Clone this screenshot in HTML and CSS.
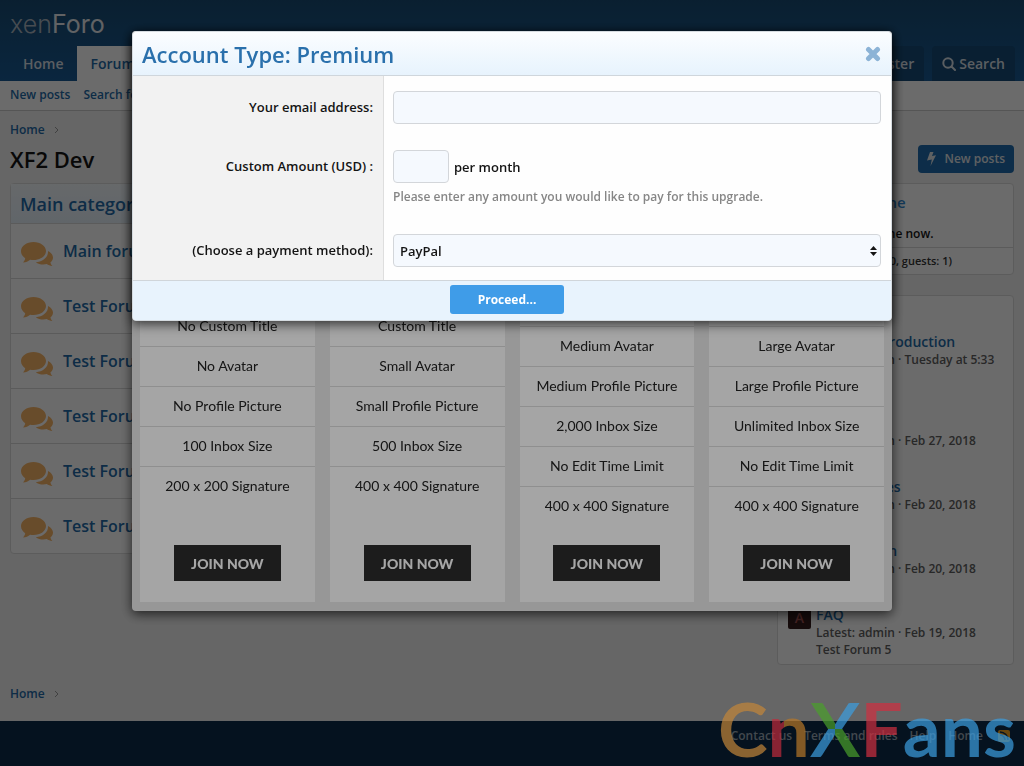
FILE: index.html
```html
<!DOCTYPE html>
<html lang="en">
<head>
<meta charset="UTF-8">
<meta name="viewport" content="width=device-width, initial-scale=1">
<title>XF2 Dev</title>
<link rel="stylesheet" href="styles.css">
</head>
<body>
<svg width="0" height="0" class="defs">
  <symbol id="comments" viewBox="0 0 32 26">
    <path d="M27 9c3 1.500 5 4 5 6.500 0 2-1 3.700-2.600 5 .3 1.400 1 2.500 2 3.500-2.400 0-4.200-.8-5.600-1.900-4 .9-8.300.2-11-1.900C21.500 19.700 27.500 15.500 27 9z"/>
    <path d="M12.500 0C19.400 0 25 4 25 9s-5.600 9-12.500 9c-1.200 0-2.300-.1-3.400-.3C7.300 19.200 5 20.300 2 20.500c1.200-1.200 2-2.600 2.200-4.300C1.600 14.500 0 12 0 9c0-5 5.600-9 12.500-9z"/>
  </symbol>
</svg>

<header class="header">
  <a href="#" class="logo"><span>xen</span>Foro</a>
  <nav class="nav">
    <a href="#" class="tab">Home</a>
    <a href="#" class="tab active">Forums</a>
    <a href="#" class="tab visitor first">Register</a>
    <a href="#" class="tab visitor">
      <svg width="14" height="14" viewBox="0 0 14 14" fill="none" stroke="currentColor" stroke-width="2"><circle cx="6" cy="6" r="4.700"/><path d="M9.500 9.500L13 13" stroke-linecap="round"/></svg>
      Search
    </a>
  </nav>
</header>
<nav class="subnav">
  <a href="#">New posts</a>
  <a href="#">Search forums</a>
</nav>

<main class="main">
  <div class="crumbs"><a href="#">Home</a><svg width="5" height="8" viewBox="0 0 5 8"><path d="M1 1l3 3-3 3" fill="none" stroke="#999"/></svg></div>
  <div class="titlebar">
    <h1>XF2 Dev</h1>
    <a href="#" class="newposts">
      <svg width="9" height="14" viewBox="0 0 9 14"><path d="M3 0h3.500L5 4l4-.8L3.500 14l1.300-6.500L0 8.600z" fill="currentColor"/></svg>
      New posts
    </a>
  </div>

  <div class="columns">
    <section class="block forums">
      <h2>Main category</h2>
      <div class="forum"><svg><use href="#comments"/></svg><a href="#">Main forum</a></div>
      <div class="forum"><svg><use href="#comments"/></svg><a href="#">Test Forum 1</a></div>
      <div class="forum"><svg><use href="#comments"/></svg><a href="#">Test Forum 2</a></div>
      <div class="forum"><svg><use href="#comments"/></svg><a href="#">Test Forum 3</a></div>
      <div class="forum"><svg><use href="#comments"/></svg><a href="#">Test Forum 4</a></div>
      <div class="forum"><svg><use href="#comments"/></svg><a href="#">Test Forum 5</a></div>
    </section>

    <aside class="sidebar">
      <section class="block online">
        <h3>Members online</h3>
        <p>No members online now.</p>
        <footer>Total: 1 (members: 0, guests: 1)</footer>
      </section>
      <section class="block latest">
        <h3>Latest posts</h3>
        <div class="post"><span class="avatar">A</span><div><a href="#">Forums introduction</a><p>Latest: admin · Tuesday at 5:33 PM</p><p>Main forum</p></div></div>
        <div class="post"><span class="avatar">A</span><div><a href="#">Welcome</a><p>Latest: admin · Feb 27, 2018</p><p>Test Forum 1</p></div></div>
        <div class="post"><span class="avatar">A</span><div><a href="#">Forum Rules</a><p>Latest: admin · Feb 20, 2018</p><p>Test Forum 2</p></div></div>
        <div class="post"><span class="avatar">A</span><div><a href="#">Information</a><p>Latest: admin · Feb 20, 2018</p><p>Test Forum 3</p></div></div>
        <div class="post"><span class="avatar">A</span><div><a href="#">FAQ</a><p>Latest: admin · Feb 19, 2018</p><p>Test Forum 5</p></div></div>
      </section>
    </aside>
  </div>

  <div class="crumbs bottom"><a href="#">Home</a><svg width="5" height="8" viewBox="0 0 5 8"><path d="M1 1l3 3-3 3" fill="none" stroke="#999"/></svg></div>
</main>

<footer class="footer">
  <a href="#">Contact us</a>
  <a href="#">Terms and rules</a>
  <a href="#">Help</a>
  <a href="#">Home</a>
  <a href="#" class="rss" aria-label="RSS"><svg width="12" height="12" viewBox="0 0 12 12" fill="none" stroke="#0e2b4a" stroke-width="1.500"><path d="M2 5a5 5 0 0 1 5 5M2 2a8 8 0 0 1 8 8"/></svg></a>
</footer>

<div class="overlay">
  <div class="dialog plans-dialog">
    <div class="dialog-title">Account Upgrades</div>
    <div class="plans">
      <div class="plan">
        <h4>Free</h4><div class="price">$0</div>
        <ul><li>Forum Access</li><li>Ads Displayed</li><li>No Custom Title</li><li>No Avatar</li><li>No Profile Picture</li><li>100 Inbox Size</li><li>200 x 200 Signature</li></ul>
        <button type="button">JOIN NOW</button>
      </div>
      <div class="plan">
        <h4>Basic</h4><div class="price">$5</div>
        <ul><li>Forum Access</li><li>No Ads</li><li>Custom Title</li><li>Small Avatar</li><li>Small Profile Picture</li><li>500 Inbox Size</li><li>400 x 400 Signature</li></ul>
        <button type="button">JOIN NOW</button>
      </div>
      <div class="plan">
        <h4>Plus</h4><div class="price">$10</div>
        <ul><li>No Ads</li><li>Custom Title<br>and Banner</li><li>Medium Avatar</li><li>Medium Profile Picture</li><li>2,000 Inbox Size</li><li>No Edit Time Limit</li><li>400 x 400 Signature</li></ul>
        <button type="button">JOIN NOW</button>
      </div>
      <div class="plan">
        <h4>Premium</h4><div class="price">Custom</div>
        <ul><li>No Ads</li><li>Custom Title<br>and Banner</li><li>Large Avatar</li><li>Large Profile Picture</li><li>Unlimited Inbox Size</li><li>No Edit Time Limit</li><li>400 x 400 Signature</li></ul>
        <button type="button">JOIN NOW</button>
      </div>
    </div>
  </div>
</div>

<div class="overlay">
  <form class="dialog pay-dialog">
    <div class="dialog-title">
      <h2>Account Type: Premium</h2>
      <button type="button" class="close" aria-label="Close"><svg width="16" height="16" viewBox="0 0 16 16"><path d="M3.500 3.500l9 9M12.500 3.500l-9 9" stroke="#8cb3d6" stroke-width="5" stroke-linecap="round"/></svg></button>
    </div>
    <div class="row">
      <label for="email">Your email address:</label>
      <div class="field"><input type="email" id="email"></div>
    </div>
    <div class="row tall">
      <label for="amount">Custom Amount (USD) :</label>
      <div class="field">
        <div class="amount"><input type="text" id="amount"><span>per month</span></div>
        <p class="hint">Please enter any amount you would like to pay for this upgrade.</p>
      </div>
    </div>
    <div class="row">
      <label for="method">(Choose a payment method):</label>
      <div class="field select">
        <select id="method"><option>PayPal</option></select>
        <svg width="7" height="10" viewBox="0 0 7 10"><path d="M3.500 0L7 4H0zM0 6h7l-3.500 4z" fill="#141414"/></svg>
      </div>
    </div>
    <div class="submit"><button type="submit">Proceed...</button></div>
  </form>
</div>

<div class="watermark"><span class="orange">C</span><span class="two-n">n</span><span class="two-x">X</span><span class="red">F</span><span class="blue">ans</span></div>
</body>
</html>
```
FILE: styles.css
```css
* {
  box-sizing: border-box;
}
body {
  margin: 0;
  min-height: 100vh;
  display: flex;
  flex-direction: column;
  background: #f0f0f0;
  color: #141414;
  font-family: "Open Sans", sans-serif;
  font-size: 13px;
  font-weight: 600;
}
a {
  color: #2269a6;
  text-decoration: none;
}
h1, h2, h3, h4, p, ul {
  margin: 0;
  padding: 0;
}
.defs {
  position: absolute;
}

/* header */
.header {
  height: 81px;
  display: flex;
  flex-direction: column;
  justify-content: space-between;
  background: linear-gradient(#184b73, #185a94);
}
.logo {
  padding: 9px 10px 0;
  font-family: Inter, sans-serif;
  font-size: 25px;
  font-weight: 400;
  line-height: 30px;
  color: #e4e8ec;
}
.logo span {
  font-weight: 300;
  color: #a8b4c0;
}
.nav {
  display: flex;
  gap: 8px;
  padding: 0 9px 0 10px;
}
.tab {
  height: 35px;
  padding: 0 13px;
  font-size: 14px;
  line-height: 35px;
  color: #d5dde4;
}
.tab.active {
  margin-left: -8px;
  padding-left: 14px;
  background: #fdfdfd;
  color: #2269a6;
}
.tab.visitor {
  display: flex;
  align-items: center;
  gap: 3px;
  padding: 0 10px;
  border-radius: 4px 4px 0 0;
  background: #164a76;
}
.tab.first {
  margin-left: auto;
}
.subnav {
  display: flex;
  gap: 13px;
  height: 30px;
  padding: 0 10px;
  border-bottom: 1px solid #c8c8c8;
  background: #fdfdfd;
  font-size: 12px;
  line-height: 28px;
}

/* content */
.main {
  flex: 1;
  padding: 10px 10px 0 10px;
}
.crumbs {
  display: flex;
  align-items: center;
  gap: 9px;
  font-size: 12px;
  line-height: 18px;
}
.crumbs.bottom {
  margin-top: 20px;
}
.titlebar {
  display: flex;
  justify-content: space-between;
  align-items: center;
  height: 39px;
  margin-bottom: 5px;
}
h1 {
  font-size: 22px;
  font-weight: 600;
  line-height: 28px;
}
.newposts {
  display: flex;
  align-items: center;
  gap: 9px;
  height: 28px;
  padding: 0 9px;
  border-radius: 4px;
  background: #1f6bac;
  color: #e0e4e8;
  font-size: 12px;
}
.columns {
  display: flex;
  align-items: flex-start;
  gap: 20px;
}
.block {
  border: 1px solid #dadada;
  border-radius: 4px;
  background: #fdfdfd;
}
.forums {
  flex: 1;
}
.forums h2 {
  height: 39px;
  padding-left: 9px;
  background: linear-gradient(#f2f7fb, #e4eff8);
  color: #2269a6;
  font-size: 18px;
  font-weight: 600;
  line-height: 40px;
}
.forum {
  display: flex;
  gap: 10px;
  height: 55px;
  padding: 14px 10px;
  border-top: 1px solid #d6d6d6;
  font-size: 16px;
  line-height: 26px;
}
.forum svg {
  width: 32px;
  height: 26px;
  margin-top: 4px;
  fill: #f5b366;
}
.sidebar {
  width: 237px;
  display: flex;
  flex-direction: column;
  gap: 20px;
}
.block h3 {
  padding: 0 10px;
  color: #2e86cf;
  font-size: 15px;
  font-weight: 600;
  line-height: 37px;
}
.online p {
  padding: 0 10px;
  font-size: 12px;
  line-height: 26px;
}
.online footer {
  border-top: 1px solid #d6d6d6;
  padding: 0 10px;
  color: #333;
  font-size: 11px;
  line-height: 26px;
}
.latest {
  padding-bottom: 6px;
}
.post {
  display: flex;
  gap: 5px;
  padding: 0 10px 12px;
}
.post:last-child {
  padding-bottom: 0;
}
.post > div {
  width: 180px;
}
.post a {
  display: block;
  font-size: 14px;
  line-height: 18px;
}
.post p {
  color: #606060;
  font-size: 12px;
  line-height: 17px;
}
.avatar {
  width: 23px;
  height: 23px;
  border-radius: 2px;
  background: #331a1a;
  color: #a05050;
  font-size: 14px;
  line-height: 23px;
  text-align: center;
}
.footer {
  display: flex;
  justify-content: flex-end;
  gap: 12px;
  height: 45px;
  padding: 6px 14px 0 10px;
  background: #0e2b4a;
  font-size: 12px;
  line-height: 18px;
}
.footer a {
  color: #9dabb8;
}
.footer .rss {
  width: 12px;
  height: 12px;
  margin: 3px 0 0 3px;
  border-radius: 2px;
  background: #f5a623;
  line-height: 0;
}

/* dialogs */
.overlay {
  position: fixed;
  inset: 0;
  padding-top: 31px;
  background: rgba(0, 0, 0, .35);
}
.dialog {
  max-width: 760px;
  margin: 0 auto;
  border-radius: 4px;
  box-shadow: 0 3px 12px rgba(0, 0, 0, .7);
}
.dialog-title {
  display: flex;
  justify-content: space-between;
  align-items: center;
  height: 44px;
  padding: 0 10px 0 9px;
  border-bottom: 1px solid #cfd6dc;
  border-radius: 4px 4px 0 0;
  background: linear-gradient(#fbfdff, #e7f3fd);
}
.dialog-title h2 {
  color: #2a70ac;
  font-size: 22px;
  font-weight: 600;
}
.plans-dialog {
  background: #e8e8e8;
}
.plans {
  display: flex;
  gap: 15px;
  padding: 9px 8px;
  font-family: Lato, sans-serif;
  font-weight: 400;
}
.plan {
  flex: 1;
  display: flex;
  flex-direction: column;
  padding-bottom: 21px;
  background: #fdfdfd;
  text-align: center;
}
.plan h4 {
  font-size: 20px;
  line-height: 50px;
}
.price {
  font-size: 36px;
  line-height: 92px;
}
.plan ul {
  margin-bottom: 19px;
  list-style: none;
}
.plan li {
  padding: 9px 4px 10px;
  border-top: 1px solid #dcdcdc;
  font-size: 14px;
  line-height: 20px;
  color: #222;
}
.plan button {
  flex-shrink: 0;
  width: 107px;
  height: 36px;
  margin: auto auto 0;
  border: 0;
  background: #2c2c2c;
  color: #fff;
  font: 900 14px Lato, sans-serif;
}
.pay-dialog {
  position: relative;
  overflow: hidden;
  border: 1px solid #d5dbe0;
  background: #fefefe;
}
.close {
  padding: 0;
  border: 0;
  background: none;
  line-height: 0;
}
.row {
  display: flex;
}
.row label {
  width: 251px;
  padding: 15px 10px 13px 0;
  border-right: 1px solid #dedede;
  background: #f2f2f2;
  line-height: 33px;
  text-align: right;
}
.field {
  flex: 1;
  padding: 15px 10px 13px 9px;
}
.tall .field {
  padding: 13px 10px 12px 9px;
}
.tall label {
  padding-top: 13px;
}
.row input,
.row select {
  display: block;
  width: 100%;
  height: 33px;
  padding: 0 6px;
  border: 1px solid #d3d6da;
  border-radius: 4px;
  background: #f5f9fe;
  color: #141414;
  font: 600 13px "Open Sans", sans-serif;
}
.row select {
  appearance: none;
}
.select {
  position: relative;
}
.select svg {
  position: absolute;
  right: 14px;
  top: 27px;
}
.amount {
  display: flex;
  align-items: center;
  gap: 5px;
}
.row .amount input {
  width: 56px;
}
.hint {
  margin-top: 4px;
  color: #868686;
  font-size: 12px;
  line-height: 20px;
}
.submit {
  display: flex;
  justify-content: center;
  padding: 4px 10px 6px 0;
  border-top: 1px solid #d0d5da;
  background: #e8f3fd;
}
.submit button {
  width: 114px;
  height: 29px;
  border: 0;
  border-radius: 3px;
  background: #3f9ce8;
  color: #fff;
  font: bold 12px "Open Sans", sans-serif;
}

/* site mark over the page corner */
.watermark {
  position: fixed;
  right: 8px;
  bottom: 0;
  display: flex;
  font-family: Lato, sans-serif;
  font-size: 75px;
  font-weight: 700;
  line-height: 75px;
  opacity: .7;
}
.orange {
  color: #c4873a;
}
.red {
  color: #d03040;
}
.blue {
  color: #3c9ee0;
}
.two-n,
.two-x {
  background: linear-gradient(90deg, #c02c3c 16px, #b87828 16px);
  -webkit-background-clip: text;
  background-clip: text;
  color: transparent;
}
.two-x {
  background-image: conic-gradient(from 0deg at 50% 51%, #3c9ee0 90deg, #4ba02c 90deg 180deg, #3c9ee0 180deg 270deg, #4ba02c 270deg);
}
```
